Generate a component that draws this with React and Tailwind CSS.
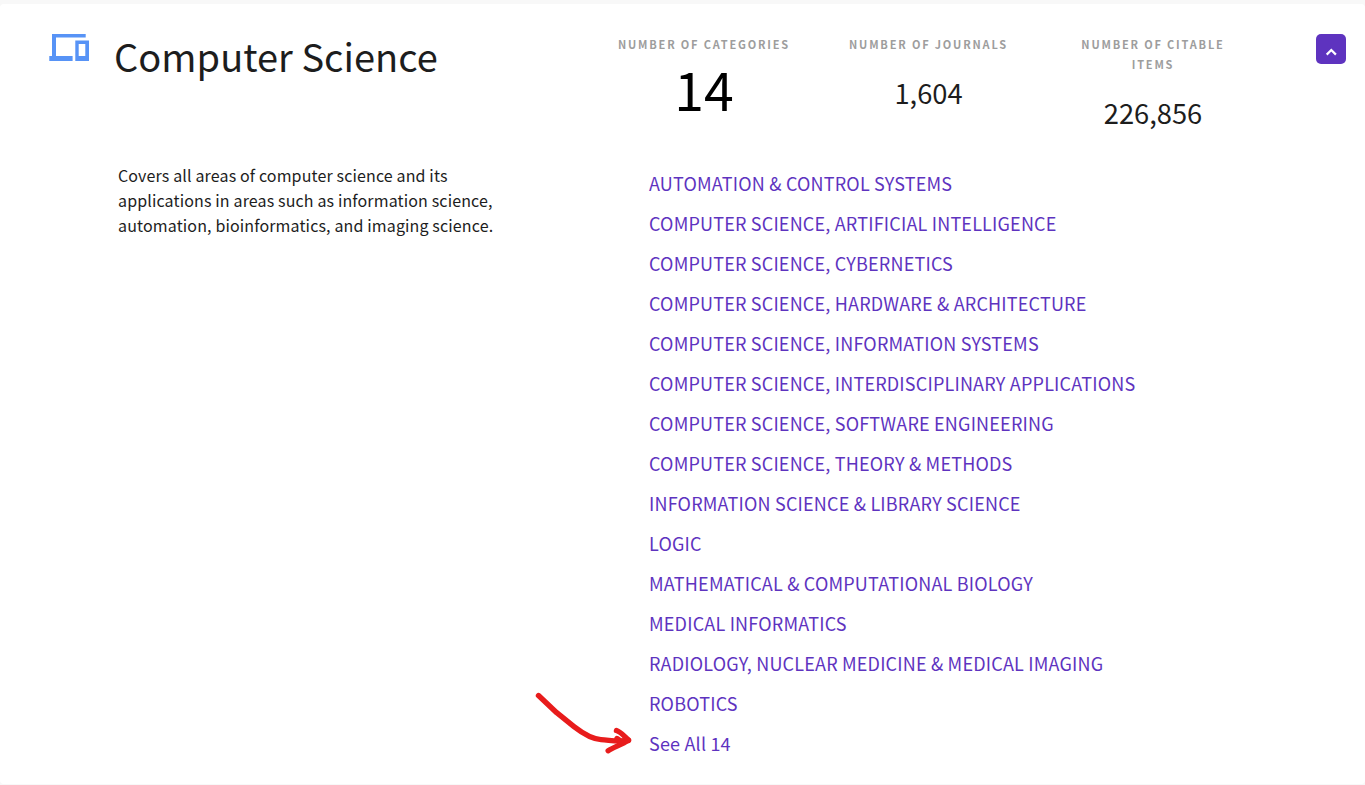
const categories = [
  "AUTOMATION & CONTROL SYSTEMS",
  "COMPUTER SCIENCE, ARTIFICIAL INTELLIGENCE",
  "COMPUTER SCIENCE, CYBERNETICS",
  "COMPUTER SCIENCE, HARDWARE & ARCHITECTURE",
  "COMPUTER SCIENCE, INFORMATION SYSTEMS",
  "COMPUTER SCIENCE, INTERDISCIPLINARY APPLICATIONS",
  "COMPUTER SCIENCE, SOFTWARE ENGINEERING",
  "COMPUTER SCIENCE, THEORY & METHODS",
  "INFORMATION SCIENCE & LIBRARY SCIENCE",
  "LOGIC",
  "MATHEMATICAL & COMPUTATIONAL BIOLOGY",
  "MEDICAL INFORMATICS",
  "RADIOLOGY, NUCLEAR MEDICINE & MEDICAL IMAGING",
  "ROBOTICS",
  "See All 14",
];

const labelClass = "text-center text-[11px] leading-[20px] font-semibold tracking-[1.82px] text-[#9d9d9d]";
const valueClass = "mt-[18px] text-center text-[27.3px] leading-[40px]";

export default function App() {
  return (
    <div className="h-[785px] overflow-hidden bg-[#f8f8f8] pt-[4px] pb-[1px] font-['Noto_Sans_CJK_SC',sans-serif] text-[#1d1d1d]">
      <main className="relative h-[780px] rounded bg-white">
        <header className="flex h-[159px] items-start">
          <svg className="mt-[30px] ml-[49px] h-[27px] w-[40px] shrink-0" viewBox="0 0 40 27" fill="#5793f6">
            <path d="M3 0h33.700v3.400H7V22h16.600v5H.3v-5H3z" />
            <path fillRule="evenodd" d="M26.300 6.500H40V27H26.300zM29.700 10v12h6.600V10z" />
          </svg>
          <h1 className="mt-[28px] ml-[25px] w-[499px] text-[38px] leading-[48px] tracking-[0.03px] whitespace-nowrap">Computer Science</h1>
          <section className="mt-[30px] w-[182px]">
            <div className={labelClass}>NUMBER OF CATEGORIES</div>
            <div className="mt-[4px] text-center text-[53.500px] leading-[60px] text-black">14</div>
          </section>
          <section className="mt-[30px] ml-[42.500px] w-[182px]">
            <div className={labelClass}>NUMBER OF JOURNALS</div>
            <div className={valueClass}>1,604</div>
          </section>
          <section className="mt-[30px] ml-[42.500px] w-[182px]">
            <div className={labelClass}>
              NUMBER OF CITABLE
              <br />
              ITEMS
            </div>
            <div className={valueClass}>226,856</div>
          </section>
          <button aria-label="Collapse" className="mt-[30px] mr-[19px] ml-auto size-[30px] rounded-[5px] bg-[#5e33bf]">
            <svg viewBox="0 0 30 30" className="size-[30px]" fill="none" stroke="#fff" strokeWidth="2.2">
              <path d="M10.700 20.600 15.300 16l4.600 4.600" />
            </svg>
          </button>
        </header>
        <div className="flex">
          <p className="w-[649px] pl-[118px] text-[16px] leading-[25px] tracking-[0.14px]">
            Covers all areas of computer science and its<br />
            applications in areas such as information science,<br />
            automation, bioinformatics, and imaging science.
          </p>
          <ul className="text-[18px] leading-[40px] tracking-[0.19px] text-[#5e33bf]">
            {categories.map((name) => (
              <li key={name} className="whitespace-nowrap">{name}</li>
            ))}
          </ul>
        </div>
        <svg className="absolute top-[686px] left-[530px] h-[66px] w-[110px]" viewBox="530 690 110 66" fill="none" stroke="#e81c1c" strokeWidth="5.4" strokeLinecap="round" strokeLinejoin="round">
          <path d="M538.500 695.500 556.700 712.700 574 726.700C586 736 594 739.300 601 739.600C609 739.800 616 742.500 628.500 740.500" />
          <path d="M616.500 730.500C621 732 624 736 628.500 740C622 744.500 614 747 608.200 750.700" />
          <path d="M617 738.500 622 742 M620 741.500 628 740.200" />
        </svg>
      </main>
    </div>
  );
}
